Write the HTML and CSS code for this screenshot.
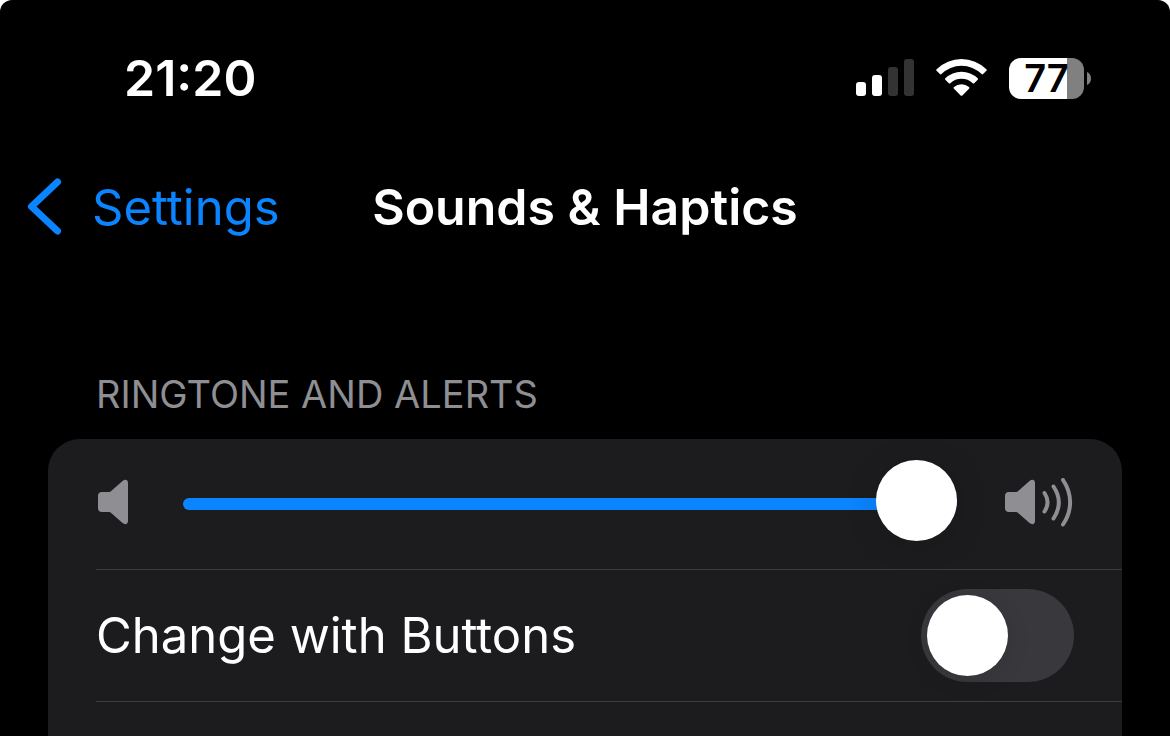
FILE: index.html
```html
<!DOCTYPE html>
<html lang="en">
<head>
    <meta charset="UTF-8">
    <meta name="viewport" content="width=device-width, initial-scale=1.0">
    <title>Sounds &amp; Haptics</title>
    <link rel="stylesheet" href="styles.css">
</head>
<body>
    <div class="screen">
        <div class="status-bar">
            <span class="time">21:20</span>
            <div class="status-icons">
                <svg width="58" height="40" viewBox="0 0 58 40" fill="#fff" aria-label="Signal">
                    <rect x="0" y="24" width="10" height="14" rx="3"/>
                    <rect x="16" y="17" width="10" height="21" rx="3"/>
                    <rect x="32" y="9" width="10" height="29" rx="3" fill="#333"/>
                    <rect x="48" y="1" width="10" height="37" rx="3" fill="#333"/>
                </svg>
                <svg width="51" height="40" viewBox="0 0 51 40" fill="#fff" aria-label="Wi-Fi">
                    <path d="M.6 11.2a35.6 35.6 0 0 1 49.8 0c.5.5.5 1 0 1.5l-3.3 3.3c-.5.5-1 .5-1.5 0a28.6 28.6 0 0 0-40.2 0c-.5.5-1 .5-1.5 0l-3.300-3.300c-.5-.5-.5-1 0-1.5z"/>
                    <path d="M9.3 20.3a23.4 23.4 0 0 1 32.4 0c.5.5.5 1 0 1.5l-3.5 3.4c-.5.5-1 .5-1.5 0a16.3 16.3 0 0 0-22.4 0c-.5.5-1 .5-1.5 0l-3.5-3.4c-.5-.5-.5-1 0-1.5z"/>
                    <path d="M18 29a11.4 11.4 0 0 1 15 0c.6.5.6 1.1 0 1.7l-6.6 6.7c-.6.6-1.2.6-1.8 0l-6.6-6.7c-.6-.6-.6-1.2 0-1.7z"/>
                </svg>
                <div class="battery">
                    <span class="battery-level">77</span>
                    <svg width="4" height="13" viewBox="0 0 4 13" fill="#808080" aria-hidden="true">
                        <path d="M0 0c2.5 1 4 3.5 4 6.500s-1.500 5.500-4 6.500z"/>
                    </svg>
                </div>
            </div>
        </div>

        <header class="nav-bar">
            <a href="#" class="back">
                <svg width="35" height="58" viewBox="0 0 35 58" fill="none" stroke="#0a84ff" stroke-width="7" stroke-linecap="round" stroke-linejoin="round" aria-hidden="true">
                    <path d="M30.500 4L4.500 28.500L30.500 53"/>
                </svg>
                Settings
            </a>
            <h1>Sounds &amp; Haptics</h1>
        </header>

        <main>
            <h2>RINGTONE AND ALERTS</h2>
            <div class="card">
                <div class="row">
                    <svg width="39" height="52" viewBox="0 0 39 52" fill="#8e8e93" aria-hidden="true">
                        <path d="M6 14h7c.8 0 1.300-.2 1.900-.8L26.500 3c3-2.300 5.500-.8 5.500 2v38c0 3-2.700 4.200-5.500 2L14.900 34.800c-.6-.6-1.100-.8-1.900-.8H6c-2.700 0-4-1.500-4-4V18c0-2.500 1.300-4 4-4z"/>
                    </svg>
                    <input type="range" class="volume" min="0" max="100" value="100" aria-label="Ringtone volume">
                    <svg width="69" height="52" viewBox="0 0 69 52" fill="#8e8e93" aria-hidden="true">
                        <path d="M4 14h7c.8 0 1.300-.2 1.900-.8L24.500 3c3-2.300 5.500-.8 5.500 2v38c0 3-2.700 4.200-5.500 2L12.900 34.800c-.6-.6-1.100-.8-1.900-.8H4c-2.700 0-4-1.500-4-4V18c0-2.500 1.300-4 4-4z"/>
                        <g fill="none" stroke="#8e8e93" stroke-width="4" stroke-linecap="round">
                            <path d="M39.500 15c4 6 4 12.500 0 18.500"/>
                            <path d="M48.500 8.500c7 10.500 7 21.500 0 32"/>
                            <path d="M58 2c9.500 14 9.500 30.500 0 44.500"/>
                        </g>
                    </svg>
                </div>
                <div class="row">
                    <label for="change-buttons">Change with Buttons</label>
                    <input type="checkbox" class="switch" id="change-buttons">
                </div>
            </div>
        </main>
    </div>
</body>
</html>
```
FILE: styles.css
```css
* {
    box-sizing: border-box;
}

body {
    margin: 0;
    background-color: #fff;
    color: #fff;
    font-family: Inter, "Liberation Sans", sans-serif;
    font-size: 49px;
}

.screen {
    display: flex;
    flex-direction: column;
    min-height: 100vh;
    background-color: #000;
    border-radius: 12px 12px 0 0;
}

.status-bar {
    display: flex;
    justify-content: space-between;
    align-items: center;
    height: 156px;
    padding: 0 79px 0 124px;
}

.time {
    font-size: 50px;
    font-weight: 600;
}

.status-icons {
    display: flex;
    align-items: center;
    gap: 22px;
}

.battery {
    display: flex;
    align-items: center;
    gap: 3px;
}

.battery-level {
    width: 75px;
    height: 41px;
    border-radius: 12px;
    background: linear-gradient(to right, #fff 77%, #808080 77%);
    color: #000;
    font-size: 38px;
    font-weight: 600;
    line-height: 41px;
    text-align: center;
}

/* Equal side columns keep the title centered */
.nav-bar {
    display: grid;
    grid-template-columns: 1fr auto 1fr;
    align-items: center;
    height: 102px;
    padding: 0 27px;
}

.back {
    display: flex;
    align-items: center;
    gap: 30px;
    color: #0a84ff;
    text-decoration: none;
}

h1 {
    margin: 0;
    font-size: 50px;
    font-weight: 600;
}

main {
    display: flex;
    flex-direction: column;
    flex: 1;
    padding: 112px 48px 0;
}

h2 {
    margin: 0 0 20px;
    padding-left: 48px;
    color: #8e8e93;
    font-size: 38px;
    font-weight: 400;
    line-height: 49px;
}

.card {
    flex: 1;
    padding-left: 48px;
    background-color: #1c1c1e;
    border-radius: 32px 32px 0 0;
}

.row {
    display: flex;
    justify-content: space-between;
    align-items: center;
    gap: 48px;
    height: 132px;
    padding-right: 48px;
    border-bottom: 1px solid #3d3d41;
}

.row:first-child {
    height: 131px;
}

.row svg {
    flex-shrink: 0;
}

.volume {
    flex: 1;
    min-width: 0;
    height: 12px;
    margin: 0;
    appearance: none;
    background: #0a84ff;
    border-radius: 6px;
}

.volume::-webkit-slider-thumb {
    appearance: none;
    width: 81px;
    height: 81px;
    margin-top: -7px;
    border-radius: 50%;
    background-color: #fff;
    box-shadow: 0 4px 32px rgba(0, 0, 0, 0.15);
}

.switch {
    flex-shrink: 0;
    width: 153px;
    height: 93px;
    margin: 0;
    padding: 6px;
    appearance: none;
    background-color: #39393d;
    border-radius: 47px;
}

.switch::before {
    content: "";
    display: block;
    width: 81px;
    height: 81px;
    border-radius: 50%;
    background-color: #fff;
    box-shadow: 0 4px 24px rgba(0, 0, 0, 0.1);
}

.switch:checked {
    background-color: #30d158;
}

.switch:checked::before {
    margin-left: auto;
}
```
